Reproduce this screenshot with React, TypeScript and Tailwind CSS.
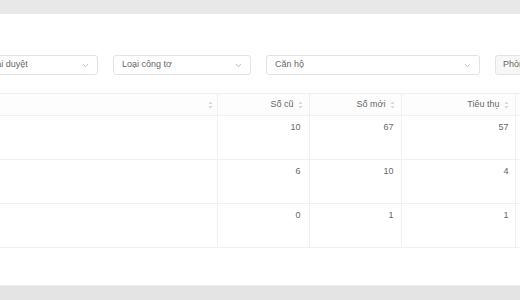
import React from "react";

function Chevron() {
  return (
    <svg width="7" height="5" viewBox="0 0 7 5" className="shrink-0">
      <path d="M1 1.2 L3.5 3.6 L6 1.2" fill="none" stroke="#b5b5b5" strokeWidth="0.9" />
    </svg>
  );
}

function SortIcon() {
  return (
    <svg width="5" height="8" viewBox="0 0 5 8" className="shrink-0">
      <path d="M2.5 0.5 L4.5 3 L0.5 3 Z" fill="#d6d6d6" />
      <path d="M2.5 7.5 L4.5 5 L0.5 5 Z" fill="#d6d6d6" />
    </svg>
  );
}

function Select({ label, className }: { label: string; className: string }) {
  return (
    <div
      className={`h-[20px] shrink-0 flex items-center justify-between rounded-[3px] border border-[#e3e3e3] bg-white pr-[8px] ${className}`}
    >
      <span className="text-[9px] text-[#666] whitespace-nowrap">{label}</span>
      <Chevron />
    </div>
  );
}

const rows = [
  { old: 10, cur: 67, use: 57 },
  { old: 6, cur: 10, use: 4 },
  { old: 0, cur: 1, use: 1 },
];

export default function App() {
  return (
    <div
      className="w-[520px] h-[300px] overflow-hidden flex flex-col bg-[#e6e6e6]"
      style={{ fontFamily: '"Liberation Sans", Arial, sans-serif' }}
    >
      <div className="h-[14px] bg-[#e8e8e8] shrink-0" />
      <div className="h-[271px] bg-white shrink-0 flex flex-col overflow-hidden">
        {/* filters */}
        <div className="mt-[41px] flex gap-[15px] ml-[-49px]">
          <Select label="Trạng thái duyệt" className="w-[147px] pl-[11px]" />
          <Select label="Loại công tơ" className="w-[138px] pl-[8px]" />
          <Select label="Căn hộ" className="w-[214px] pl-[8px]" />
          <div className="h-[20px] shrink-0 w-[80px] rounded-[3px] border border-[#e3e3e3] bg-[#f7f7f7] pl-[7px] flex items-center">
            <span className="text-[9px] text-[#666] whitespace-nowrap">Phòng</span>
          </div>
        </div>

        {/* table */}
        <div className="mt-[18px] overflow-hidden">
          <table className="table-fixed border-collapse w-[620px] text-[9px] text-[#666]">
            <colgroup>
              <col className="w-[217px]" />
              <col className="w-[92px]" />
              <col className="w-[92px]" />
              <col className="w-[114px]" />
              <col className="w-[105px]" />
            </colgroup>
            <thead>
              <tr className="h-[22px] bg-[#fdfdfd] border-t border-b border-[#f0f0f0]">
                <th className="border-r border-[#f0f0f0] pr-[4px] font-normal">
                  <div className="flex justify-end">
                    <SortIcon />
                  </div>
                </th>
                {["Số cũ", "Số mới", "Tiêu thụ"].map((h) => (
                  <th key={h} className="border-r border-[#f0f0f0] pr-[6px] font-normal">
                    <div className="flex items-center justify-end gap-[4px]">
                      <span>{h}</span>
                      <SortIcon />
                    </div>
                  </th>
                ))}
                <th className="font-normal" />
              </tr>
            </thead>
            <tbody>
              {rows.map((r, i) => (
                <tr key={i} className="h-[44px] border-b border-[#f0f0f0]">
                  <td className="border-r border-[#f0f0f0]" />
                  <td className="border-r border-[#f0f0f0] align-top text-right pr-[8px] pt-[5px] leading-[12px]">
                    {r.old}
                  </td>
                  <td className="border-r border-[#f0f0f0] align-top text-right pr-[7px] pt-[5px] leading-[12px]">
                    {r.cur}
                  </td>
                  <td className="border-r border-[#f0f0f0] align-top text-right pr-[6px] pt-[5px] leading-[12px]">
                    {r.use}
                  </td>
                  <td />
                </tr>
              ))}
            </tbody>
          </table>
        </div>
      </div>
      <div className="flex-1 bg-[#e4e4e4] border-t border-[#ececec]" />
    </div>
  );
}
